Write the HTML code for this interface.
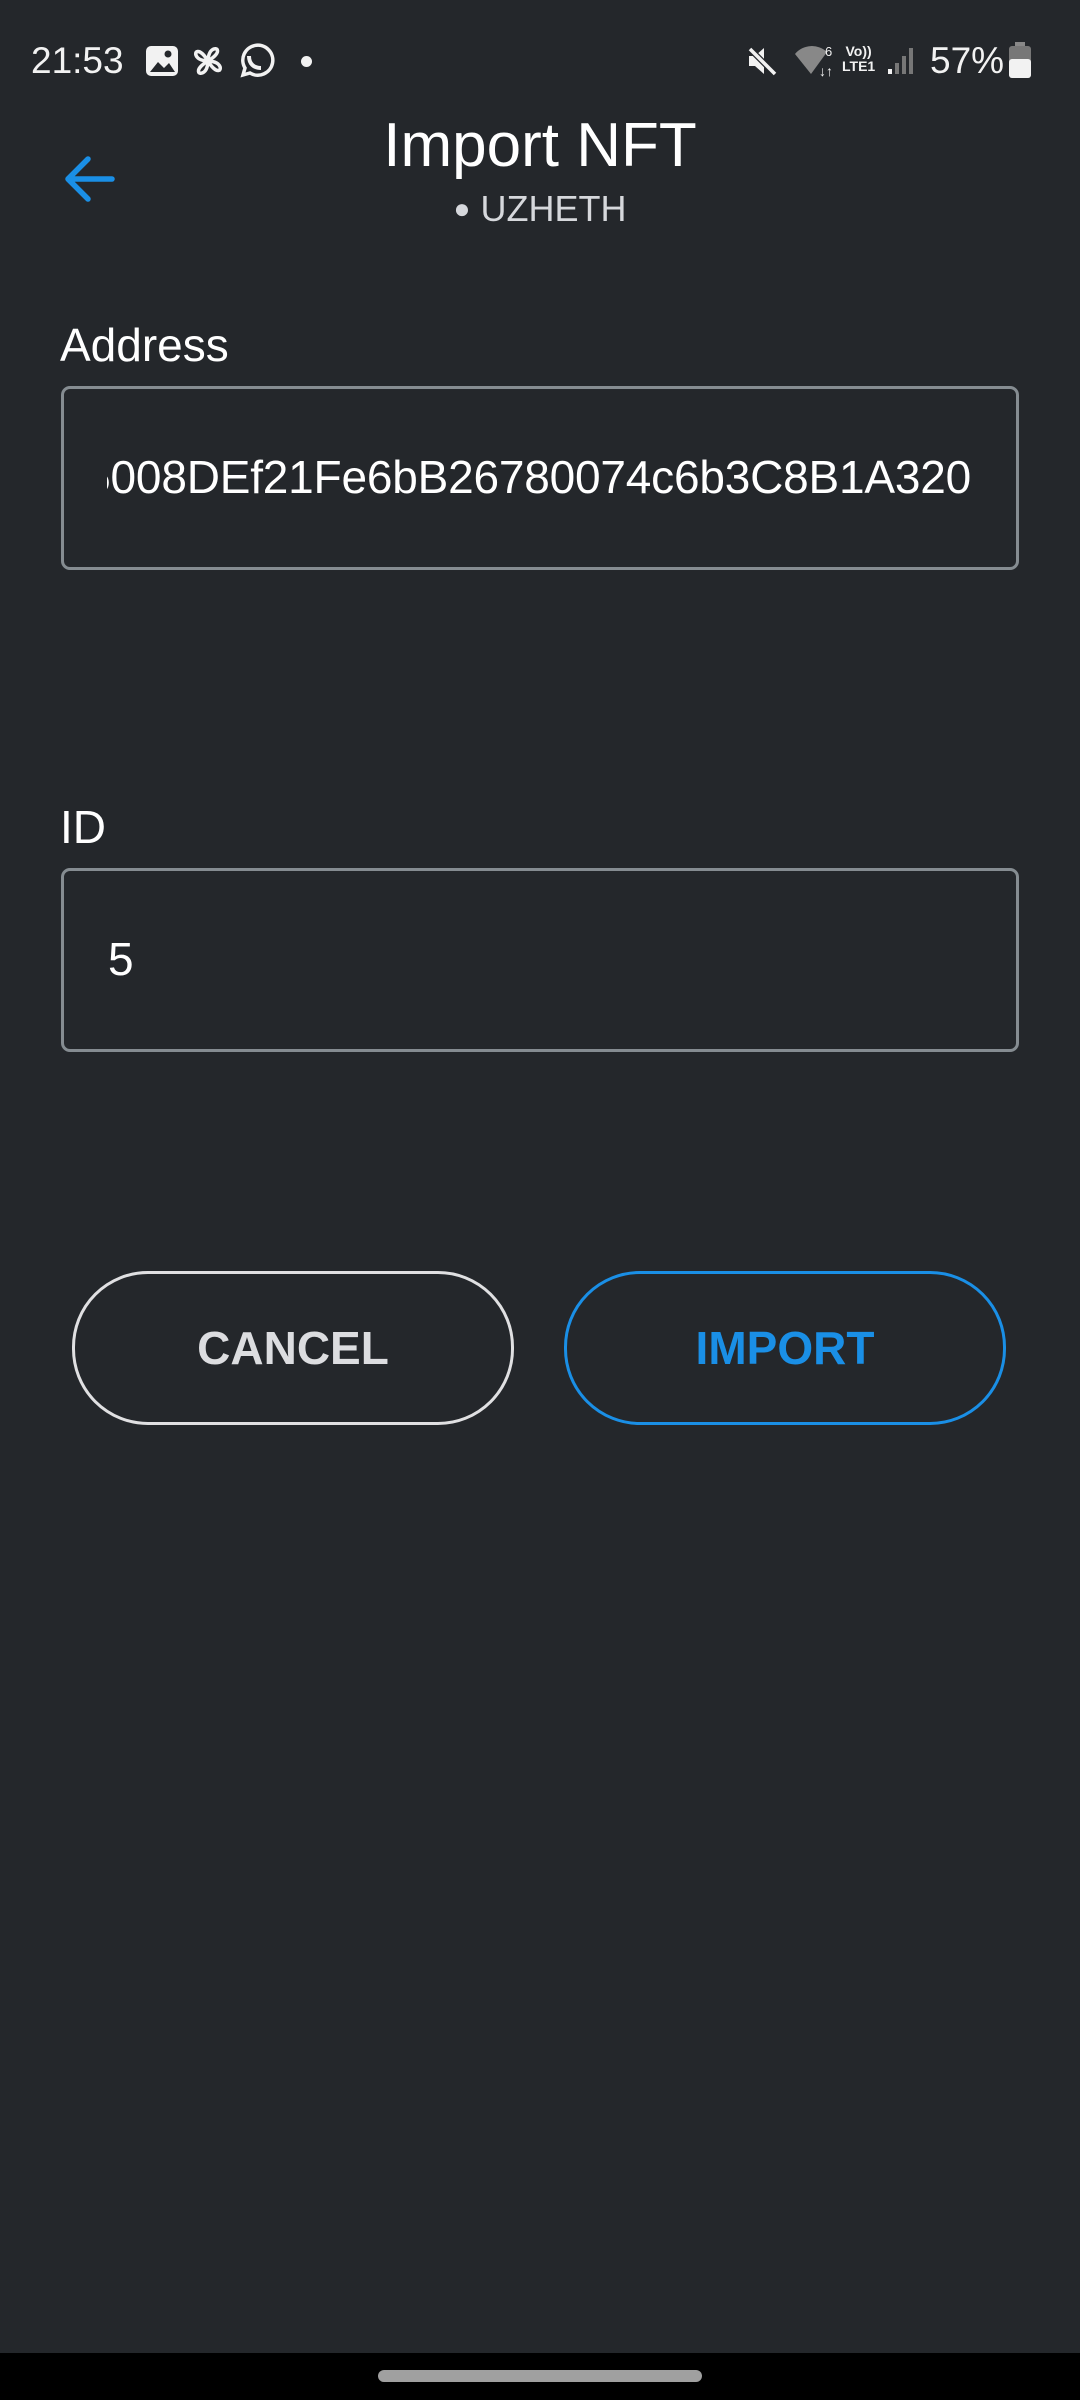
<!DOCTYPE html>
<html><head><meta charset="utf-8"><style>
html,body{margin:0;padding:0;}
body{width:1080px;height:2400px;background:#24272b;position:relative;overflow:hidden;font-family:"Liberation Sans",sans-serif;color:#fff;}
.abs{position:absolute;}
.sb{top:40px;font-size:37px;color:#f2f2f2;}
.box{position:absolute;left:61px;width:952px;border:3px solid #858c91;border-radius:9px;}
.btn{position:absolute;top:1271px;width:436px;height:148px;border-radius:76px;border:3px solid;display:flex;align-items:center;justify-content:center;font-weight:bold;font-size:46px;letter-spacing:0px;}
</style></head><body>
<!-- status bar -->
<div class="abs sb" style="left:31px;">21:53</div>
<svg class="abs" style="left:144px;top:44px" width="36" height="34" viewBox="0 0 36 34"><rect x="2" y="2" width="32" height="30" rx="5" fill="#f2f2f2"/><path d="M6 28 L14 18 L20 24 L25 19 L31 28Z" fill="#24272b"/><circle cx="24" cy="10" r="3.5" fill="#24272b"/></svg>
<svg class="abs" style="left:189px;top:42px" width="38" height="38" viewBox="0 0 38 38" fill="none" stroke="#f2f2f2" stroke-width="3.5"><path d="M19 19 C10 4 4 10 8 15 C11 19 19 19 19 19 C34 10 28 4 23 8 C19 11 19 19 19 19 C28 34 34 28 30 23 C27 19 19 19 19 19 C4 28 10 34 15 30 C19 27 19 19 19 19Z"/></svg>
<svg class="abs" style="left:235px;top:42px" width="40" height="40" viewBox="0 0 40 40" fill="none" stroke="#f2f2f2" stroke-width="3.5"><path d="M8 33 L10 26 A15 15 0 1 1 15 31 Z"/><path d="M14 14 C14 22 19 26 26 26" stroke-width="4"/></svg>
<div class="abs" style="left:301px;top:56px;width:11px;height:11px;border-radius:50%;background:#f2f2f2"></div>
<svg class="abs" style="left:745px;top:44px" width="34" height="34" viewBox="0 0 34 34"><path d="M4 12h6l9-8v26l-9-8H4z" fill="#f2f2f2"/><path d="M3 3 L31 31" stroke="#24272b" stroke-width="6"/><path d="M5 5 L30 30" stroke="#f2f2f2" stroke-width="3.5"/></svg>
<svg class="abs" style="left:793px;top:42px" width="48" height="36" viewBox="0 0 48 36"><path d="M2 12 A22 22 0 0 1 34 10 L18 32Z" fill="#888"/><text x="32" y="14" font-size="13" fill="#f2f2f2" font-family="Liberation Sans">6</text><text x="26" y="34" font-size="14" fill="#f2f2f2" font-family="Liberation Sans">↓↑</text></svg>
<div class="abs" style="left:842px;top:44px;font-size:14px;line-height:15px;color:#f2f2f2;text-align:center;font-weight:bold">Vo))<br>LTE1</div>
<svg class="abs" style="left:886px;top:44px" width="32" height="32" viewBox="0 0 32 32"><rect x="2" y="25" width="4" height="5" fill="#f2f2f2"/><rect x="9" y="19" width="4" height="11" fill="#777"/><rect x="16" y="12" width="4" height="18" fill="#777"/><rect x="23" y="4" width="4" height="26" fill="#777"/></svg>
<div class="abs sb" style="left:930px;">57%</div>
<svg class="abs" style="left:1008px;top:42px" width="24" height="36" viewBox="0 0 24 36"><rect x="7" y="0" width="10" height="4" fill="#888"/><rect x="1" y="4" width="22" height="32" rx="3" fill="#777"/><rect x="1" y="17" width="22" height="19" rx="3" fill="#f2f2f2"/></svg>

<!-- header -->
<svg class="abs" style="left:62px;top:155px" width="56" height="48" viewBox="0 0 56 48" fill="none" stroke="#1a8fe6" stroke-width="5.5" stroke-linecap="round" stroke-linejoin="round"><path d="M50 24H6M26 4L6 24L26 44"/></svg>
<div class="abs" style="left:0;width:1080px;top:110px;text-align:center;font-size:62px;color:#fff">Import NFT</div>
<div class="abs" style="left:0;width:1080px;top:188px;text-align:center;font-size:36px;color:#d6d8dc"><span style="font-size:28px;vertical-align:3px">●</span> UZHETH</div>

<!-- address -->
<div class="abs" style="left:60px;top:318px;font-size:46px;color:#fff">Address</div>
<div class="box" style="top:386px;height:178px;"></div>
<div class="abs" style="left:107px;top:450px;width:864px;overflow:hidden;white-space:nowrap;direction:rtl;font-size:46px;color:#fff;letter-spacing:-0.2px"><span style="direction:ltr;unicode-bidi:embed">0x5008DEf21Fe6bB26780074c6b3C8B1A320</span></div>

<!-- id -->
<div class="abs" style="left:60px;top:800px;font-size:46px;color:#fff">ID</div>
<div class="box" style="top:868px;height:178px;"></div>
<div class="abs" style="left:108px;top:932px;font-size:46px;color:#fff">5</div>

<!-- buttons -->
<div class="btn" style="left:72px;border-color:#e0e0e2;color:#dcdde0">CANCEL</div>
<div class="btn" style="left:564px;border-color:#1a8fe6;color:#1a8fe6">IMPORT</div>

<!-- nav bar -->
<div class="abs" style="left:0;top:2353px;width:1080px;height:47px;background:#000"></div>
<div class="abs" style="left:378px;top:2370px;width:324px;height:12px;border-radius:6px;background:#a0a0a0"></div>
</body></html>
